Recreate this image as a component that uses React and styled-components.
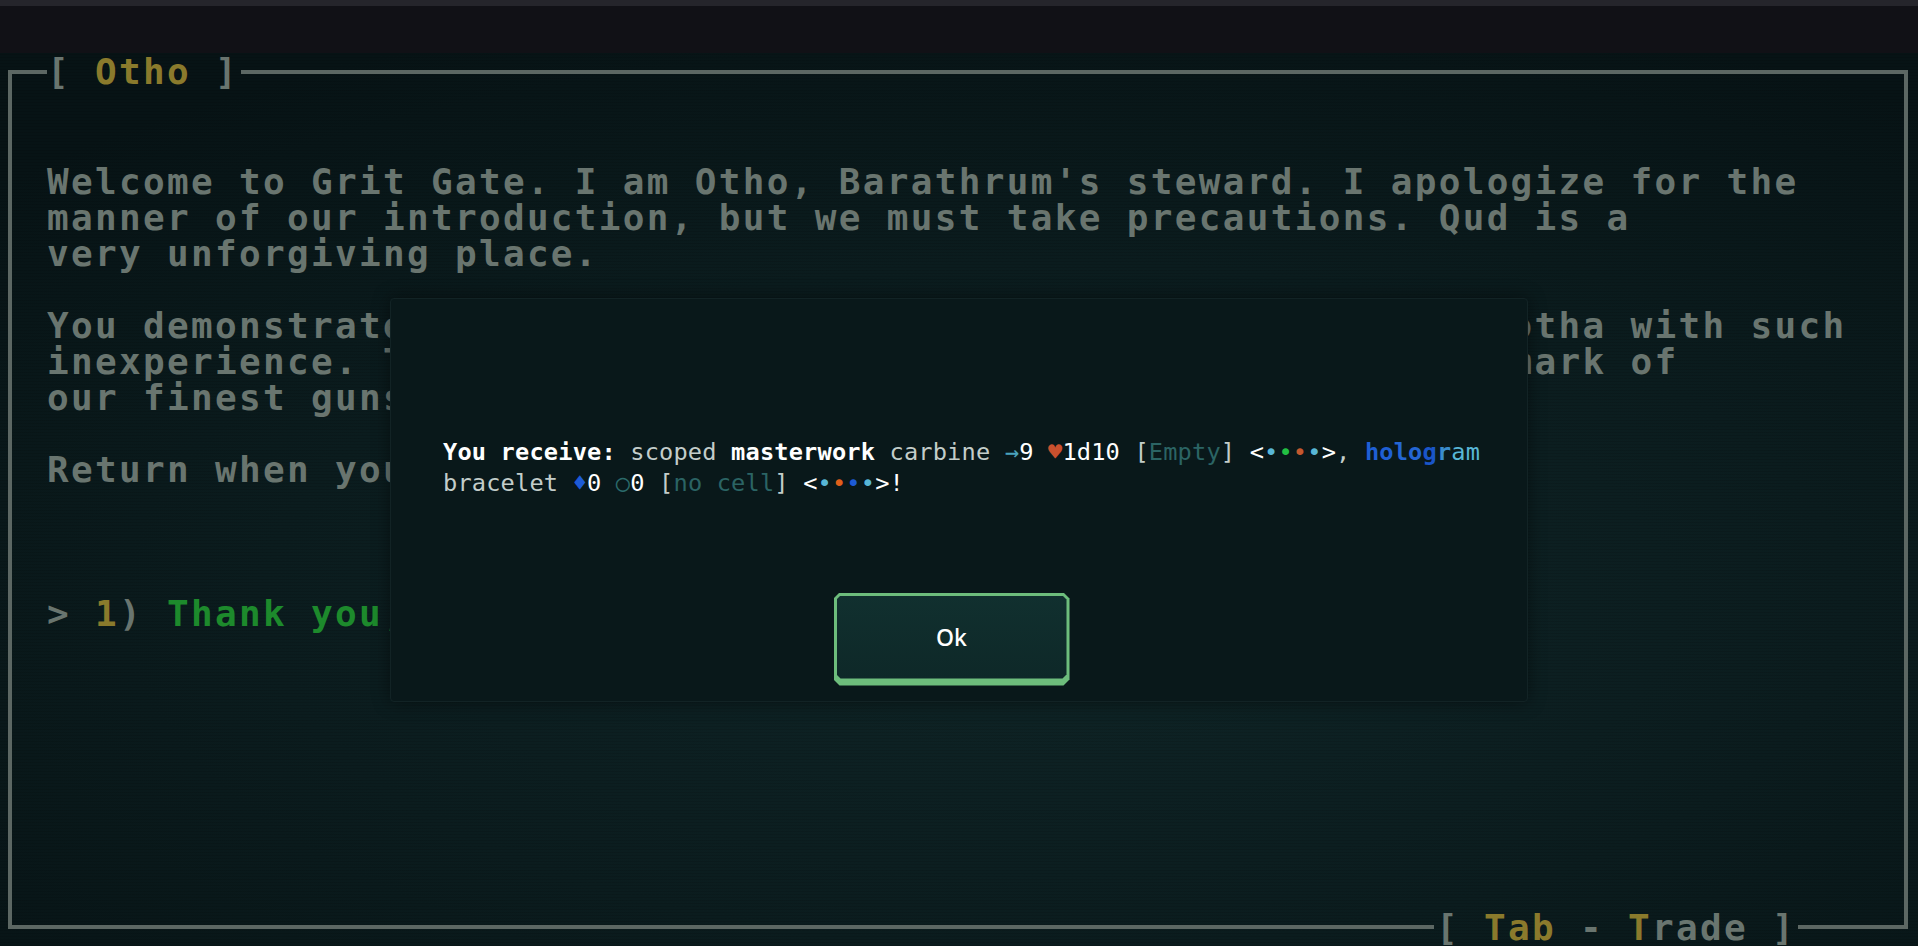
import React from "react";
import styled, { createGlobalStyle } from "styled-components";

const MONO = "'DejaVu Sans Mono', 'Liberation Mono', monospace";

const Global = createGlobalStyle`
  html, body { margin: 0; padding: 0; background: #0a1618; overflow: hidden; }
`;

const Screen = styled.div`
  height: 946px;
  display: flex;
  flex-direction: column;
  overflow: hidden;
  background: #0a1618;
`;

const TopBar = styled.div`
  flex: 0 0 53px;
  box-sizing: border-box;
  border-top: 6px solid #25252b;
  background: #111116;
`;

const Stage = styled.div`
  position: relative;
  flex: 1;
  min-height: 0;
  display: flex;
  padding: 1px 10px 0 8px;
  background:
    repeating-linear-gradient(0deg, rgba(0, 0, 0, 0.1) 0 1px, transparent 1px 3px),
    radial-gradient(ellipse 75% 70% at 55% 62%, #0f2527 0%, #0b1c1e 55%, #071315 100%);
`;

const Frame = styled.div`
  flex: 1;
  display: flex;
  flex-direction: column;
  min-width: 0;
  font-family: ${MONO};
  font-size: 36px;
  line-height: 36px;
  letter-spacing: 2.32px;
  font-weight: 700;
  color: #69756f;
`;

const Edge = styled.div`
  display: flex;
  flex: 0 0 ${(p) => p.$h}px;
  align-items: ${(p) => (p.$bottom ? "flex-start" : "flex-end")};
`;

const Rule = styled.div`
  box-sizing: border-box;
  height: ${(p) => p.$h || 20}px;
  ${(p) => (p.$grow ? "flex: 1;" : `flex: 0 0 ${p.$w}px;`)}
  margin: 0 ${(p) => p.$mr || 0}px 0 ${(p) => p.$ml || 0}px;
  border-color: #5c6763;
  border-style: solid;
  border-width: 0;
  ${(p) => (p.$bottom ? "border-bottom-width: 4px;" : "border-top-width: 4px;")}
  ${(p) => (p.$left ? "border-left-width: 4px;" : "")}
  ${(p) => (p.$right ? "border-right-width: 4px;" : "")}
`;

const Caption = styled.div`
  align-self: flex-start;
  height: 36px;
  margin-top: ${(p) => p.$mt || 0}px;
  white-space: pre;
`;

const Body = styled.div`
  flex: 1;
  border-left: 4px solid #5c6763;
  border-right: 4px solid #5c6763;
  padding: 74px 0 0 35px;
  white-space: pre;
`;

const TextLine = styled.div`
  height: 36px;
`;

const C = styled.span`
  color: ${(p) => p.$c};
  font-weight: ${(p) => (p.$b ? 700 : "inherit")};
`;

const Overlay = styled.div`
  position: absolute;
  inset: 0;
  display: flex;
  align-items: center;
  justify-content: center;
`;

const Dialog = styled.div`
  width: 1138px;
  height: 404px;
  box-sizing: border-box;
  display: flex;
  flex-direction: column;
  padding: 138px 52px 13px;
  background: #09181a;
  border: 1px solid #122325;
  border-radius: 4px;
  box-shadow: 0 0 18px rgba(0, 0, 0, 0.45);
`;

const Message = styled.div`
  font-family: ${MONO};
  font-size: 23.65px;
  letter-spacing: 0.17px;
  line-height: 31px;
  color: #c3cdca;
  white-space: pre;
`;

const Dot = styled.span`
  color: ${(p) => p.$c};
`;

const Actions = styled.div`
  margin-top: 94px;
  display: flex;
  justify-content: center;
  padding-right: 15px;
`;

const OkOuter = styled.button`
  width: 236px;
  height: 93px;
  padding: 3px 3px 7px;
  border: 0;
  background: #6dbd7c;
  clip-path: polygon(6px 0, calc(100% - 6px) 0, 100% 6px, 100% calc(100% - 6px), calc(100% - 6px) 100%, 6px 100%, 0 calc(100% - 6px), 0 6px);
  cursor: pointer;
  display: flex;
`;

const OkInner = styled.span`
  flex: 1;
  display: flex;
  align-items: center;
  justify-content: center;
  background: linear-gradient(180deg, #11302f 0%, #0e2828 100%);
  clip-path: polygon(4px 0, calc(100% - 4px) 0, 100% 4px, 100% calc(100% - 4px), calc(100% - 4px) 100%, 4px 100%, 0 calc(100% - 4px), 0 4px);
  font-family: 'Noto Sans', 'Open Sans', sans-serif;
  font-size: 23px;
  font-weight: 500;
  color: #ffffff;
`;

const GOLD = "#8a7a2c";
const GREEN = "#1d8a2c";

const holo = [
  ["h", "#1f5fd4"],
  ["o", "#1f5fd4"],
  ["l", "#2466d4"],
  ["o", "#2466d4"],
  ["g", "#1a55c8"],
  ["r", "#3a8ccc"],
  ["a", "#58b6d6"],
  ["m", "#58b6d6"],
];

export default function App() {
  return (
    <>
      <Global />
      <Screen>
        <TopBar />
        <Stage>
          <Frame>
            <Edge $h={36}>
              <Rule $w={39} $left />
              <Caption>
                {"[ "}
                <C $c={GOLD}>Otho</C>
                {" ]"}
              </Caption>
              <Rule $grow $right $ml={2} />
            </Edge>
            <Body>
              <TextLine>Welcome to Grit Gate. I am Otho, Barathrum's steward. I apologize for the</TextLine>
              <TextLine>manner of our introduction, but we must take precautions. Qud is a</TextLine>
              <TextLine>very unforgiving place.</TextLine>
              <TextLine />
              <TextLine>You demonstrated great skill in recovering the disk from Golgotha with such</TextLine>
              <TextLine>inexperience. To show our gratitude, please accept this as a mark of</TextLine>
              <TextLine>our finest guns, and a small trinket to help you on your path.</TextLine>
              <TextLine />
              <TextLine>Return when you have rested, and we will speak further.</TextLine>
              <TextLine />
              <TextLine />
              <TextLine />
              <TextLine>
                {"> "}
                <C $c={GOLD}>1</C>
                {") "}
                <C $c={GREEN}>Thank you, Otho. [End]</C>
              </TextLine>
            </Body>
            <Edge $h={28} $bottom>
              <Rule $grow $left $bottom $mr={2} $h={27} />
              <Caption $mt={8}>
                {"[ "}
                <C $c={GOLD}>Tab</C>
                {" - "}
                <C $c={GOLD}>T</C>
                {"rade ]"}
              </Caption>
              <Rule $w={110} $right $bottom $ml={2} $h={27} />
            </Edge>
          </Frame>

          <Overlay>
            <Dialog>
              <Message>
                <C $c="#ffffff" $b>You receive:</C>
                {" scoped "}
                <C $c="#ffffff" $b>masterwork</C>
                {" carbine "}
                <C $c="#4aa3bd">→</C>
                <C $c="#ffffff">9</C>{" "}
                <C $c="#c9502e">♥</C>
                <C $c="#ffffff">1d10</C>
                {" ["}
                <C $c="#2b6464">Empty</C>
                {"] "}
                <C $c="#ffffff">{"<"}</C>
                <Dot $c="#58b6d6">•</Dot>
                <Dot $c="#22c043">•</Dot>
                <Dot $c="#c4582e">•</Dot>
                <Dot $c="#58b6d6">•</Dot>
                <C $c="#ffffff">{">"}</C>
                {", "}
                {holo.map(([ch, col], i) => (
                  <C key={i} $c={col} $b={i < 6}>{ch}</C>
                ))}
                <br />
                {"bracelet "}
                <C $c="#1d5bd6">♦</C>
                <C $c="#ffffff">0</C>{" "}
                <C $c="#2b6a6a">○</C>
                <C $c="#ffffff">0</C>
                {" ["}
                <C $c="#2b6464">no cell</C>
                {"] "}
                <C $c="#ffffff">{"<"}</C>
                <Dot $c="#58b6d6">•</Dot>
                <Dot $c="#e05f1a">•</Dot>
                <Dot $c="#1d5bd6">•</Dot>
                <Dot $c="#58b6d6">•</Dot>
                <C $c="#ffffff">{">!"}</C>
              </Message>
              <Actions>
                <OkOuter type="button">
                  <OkInner>Ok</OkInner>
                </OkOuter>
              </Actions>
            </Dialog>
          </Overlay>
        </Stage>
      </Screen>
    </>
  );
}
